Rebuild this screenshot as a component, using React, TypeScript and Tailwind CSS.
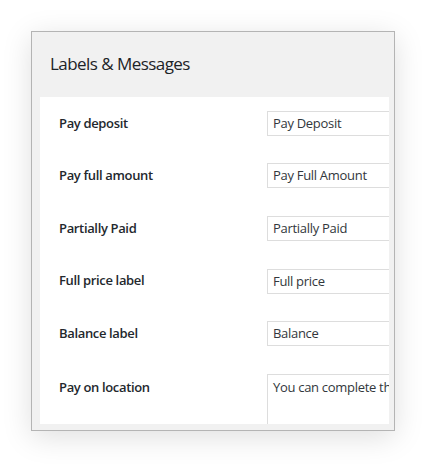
import React from 'react';

const rows = [
  { label: 'Pay deposit', value: 'Pay Deposit' },
  { label: 'Pay full amount', value: 'Pay Full Amount' },
  { label: 'Partially Paid', value: 'Partially Paid' },
  { label: 'Full price label', value: 'Full price' },
  { label: 'Balance label', value: 'Balance' },
];

const font = { fontFamily: '"Open Sans", "Noto Sans", sans-serif' };

export default function App() {
  return (
    <div className="w-[422px] h-[466px] bg-white pt-[31px] pl-[31px] overflow-hidden" style={font}>
      <div className="w-[364px] h-[400px] border border-[#b4b4b4] bg-[#f1f1f1] shadow-[0_6px_28px_rgba(0,0,0,0.13)] flex flex-col">
        {/* Header */}
        <div className="h-[65px] shrink-0 pl-[18px] pt-[20px]">
          <h2 className="text-[17px] leading-[24px] text-[#1d2327] tracking-[-0.55px]">Labels &amp; Messages</h2>
        </div>

        {/* Settings table */}
        <div className="mx-[8px] mr-[5px] mb-[6px] flex-1 bg-white overflow-hidden">
          {rows.map((row) => (
            <div key={row.label} className="flex items-center h-[52.6px]">
              <div className="w-[227px] pl-[19px] text-[13px] font-semibold text-[#23282d] tracking-[-0.35px]">
                {row.label}
              </div>
              <div className="flex-1 overflow-hidden">
                <div className="w-[200px] h-[25px] border border-[#dddddd] pl-[5px] text-[13px] leading-[23px] text-[#32373c] tracking-[-0.3px] whitespace-nowrap">
                  {row.value}
                </div>
              </div>
            </div>
          ))}
          <div className="flex items-start pt-[14px]">
            <div className="w-[227px] pl-[19px] pt-[4px] text-[13px] leading-[18px] font-semibold text-[#23282d] tracking-[-0.35px]">
              Pay on location
            </div>
            <div className="flex-1 overflow-hidden">
              <div className="w-[200px] h-[80px] border border-[#dddddd] pl-[5px] pt-[2px] text-[13px] leading-[20px] text-[#32373c] tracking-[-0.3px] whitespace-nowrap overflow-hidden">
                You can complete the payment
              </div>
            </div>
          </div>
        </div>
      </div>
    </div>
  );
}
